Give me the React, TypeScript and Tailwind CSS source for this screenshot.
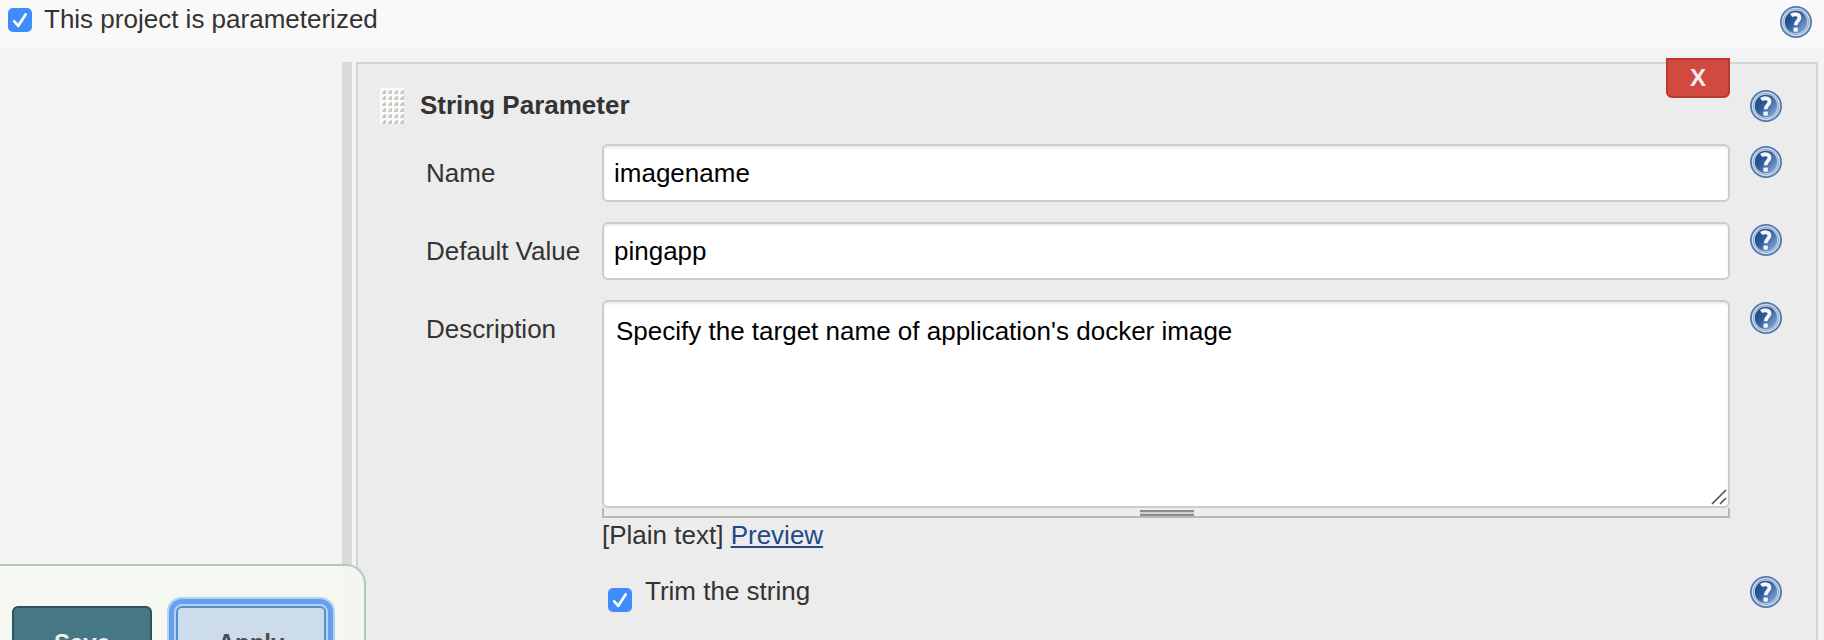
import React from "react";

function HelpIcon({ id }: { id: string }) {
  return (
    <svg width="32" height="32" viewBox="0 0 32 32" className="block shrink-0">
      <defs>
        <linearGradient id={id} x1="0.1" y1="0.2" x2="0.9" y2="0.9">
          <stop offset="0" stopColor="#204a87" />
          <stop offset="0.4" stopColor="#315d9c" />
          <stop offset="1" stopColor="#86a9d6" />
        </linearGradient>
      </defs>
      <circle cx="16" cy="16" r="16" fill="#537aaf" />
      <circle cx="16" cy="16" r="14.2" fill="#cfdaea" />
      <circle cx="16" cy="16" r="12.9" fill="#8ba5ca" />
      <circle cx="16" cy="16" r="12.1" fill="#c9d6e7" />
      <circle cx="16" cy="16" r="11.2" fill={`url(#${id})`} />
      <path
        d="M11.2 9.6c2.6-2 8.2-2.1 8.3 2 0 3.4-3.9 3.5-3.9 7.6"
        fill="none"
        stroke="#f4f7fb"
        strokeWidth="3.8"
      />
      <rect x="13.5" y="21.4" width="4.3" height="4.3" rx="0.8" fill="#f4f7fb" />
    </svg>
  );
}

function CheckedBox() {
  return (
    <span className="flex size-6 shrink-0 items-center justify-center rounded-[5px] bg-[#3f8cfc]">
      <svg width="24" height="24" viewBox="0 0 24 24">
        <path
          d="M6.2 14.2 10.2 19 17.4 7.2"
          fill="none"
          stroke="#2563b8"
          strokeOpacity="0.35"
          strokeWidth="2.6"
          strokeLinecap="round"
          strokeLinejoin="round"
        />
        <path
          d="M6.2 13.4 10.2 17.9 17.6 6.4"
          fill="none"
          stroke="#fff"
          strokeWidth="2.8"
          strokeLinecap="round"
          strokeLinejoin="round"
        />
      </svg>
    </span>
  );
}

function DragHandle() {
  return (
    <svg width="24" height="36" viewBox="0 0 24 36" className="shrink-0">
      <defs>
        <pattern id="grip" width="6" height="6" patternUnits="userSpaceOnUse">
          <rect width="6" height="6" fill="#fbfbfa" />
          <path d="M2 6V4.4L4.4 2H6V6Z" fill="#d2d1cd" />
          <path d="M3 5.6V4.6L4.6 3H5.6V5.6Z" fill="#c6c5c0" />
        </pattern>
      </defs>
      <rect width="24" height="36" fill="url(#grip)" />
    </svg>
  );
}

const field =
  "rounded-[6px] border-2 border-[#ccc] bg-white text-black shadow-[inset_0_2px_2px_rgba(0,0,0,0.075)]";

function TextRow({ id, label, value }: { id: string; label: string; value: string }) {
  return (
    <div className="flex h-[78px] items-start">
      <div className="w-[176px] shrink-0 pt-[14px]">{label}</div>
      <div className={`flex h-[58px] w-[1128px] shrink-0 items-center pl-[10px] ${field}`}>{value}</div>
      <div className="ml-5 mt-[2px]">
        <HelpIcon id={id} />
      </div>
    </div>
  );
}

export default function App() {
  return (
    <div className="relative flex h-[640px] w-[1824px] flex-col overflow-hidden bg-[#f3f3f3] font-['Liberation_Sans',Arial,sans-serif] text-[26px] leading-[30px] text-[#333]">
      <header className="flex h-12 shrink-0 items-start bg-[#f9f9f9] pl-2 pr-3">
        <div className="pt-2">
          <CheckedBox />
        </div>
        <span className="ml-3 mt-1 whitespace-nowrap">This project is parameterized</span>
        <div className="ml-auto mt-[6px]">
          <HelpIcon id="help-project" />
        </div>
      </header>

      <div className="flex flex-1 pl-[342px] pt-[14px]">
        <div className="mr-1 w-[10px] shrink-0 bg-[#dadada]" />
        <section className="relative flex w-[1462px] flex-col border-2 border-b-0 border-[#d4d4d4] bg-[#ececec]">
          <div className="flex h-20 shrink-0 items-start pl-[22px]">
            <div className="mt-6">
              <DragHandle />
            </div>
            <h2 className="ml-4 mt-[26px] font-bold">String Parameter</h2>
            <div className="ml-auto mr-[34px] mt-[26px]">
              <HelpIcon id="help-string" />
            </div>
          </div>

          <div className="flex flex-col pl-[68px]">
            <TextRow id="help-name" label="Name" value="imagename" />
            <TextRow id="help-default" label="Default Value" value="pingapp" />

            <div className="flex items-start">
              <div className="w-[176px] shrink-0 pt-[14px]">Description</div>
              <div className="w-[1128px] shrink-0">
                <div className={`flex h-[208px] items-start justify-between pl-3 pt-[14px] ${field}`}>
                  <span>Specify the target name of application's docker image</span>
                  <svg width="16" height="16" viewBox="0 0 16 16" className="mb-px mr-px self-end">
                    <path d="M1 15 15 1M9 15 15 9" stroke="#555" strokeWidth="1.7" fill="none" />
                  </svg>
                </div>
                <div className="flex h-[10px] justify-center border-2 border-t-0 border-[#b9b9b3] pl-[2px] pt-[2px]">
                  <div className="h-[6px] w-[54px] border-y-2 border-[#8d8f88] bg-[#cfd1cc]" />
                </div>
                <div className="mt-[2px] whitespace-nowrap">
                  [Plain text]{" "}
                  <a className="text-[#204a87] underline decoration-2 underline-offset-[2px]">Preview</a>
                </div>
              </div>
              <div className="ml-5 mt-[2px]">
                <HelpIcon id="help-description" />
              </div>
            </div>

            <div className="mt-[26px] flex items-start pl-[182px]">
              <div className="mt-3">
                <CheckedBox />
              </div>
              <span className="ml-[13px]">Trim the string</span>
              <div className="ml-auto mr-[34px]">
                <HelpIcon id="help-trim" />
              </div>
            </div>
          </div>

          <button className="absolute right-[86px] top-[-6px] h-10 w-16 rounded-b-[6px] border-2 border-[#bd362f] bg-[#d14a3f] text-[24px] font-bold leading-[36px] text-[#f0eeee]">
            X
          </button>
        </section>
      </div>

      <footer className="absolute left-0 top-[564px] flex h-[100px] w-[366px] items-start rounded-tr-[20px] border-r-2 border-t-2 border-[#a9cfbb] bg-[#f4f8ef]/90 pl-3 pt-10 font-bold">
        <button className="h-[60px] w-[140px] rounded-[6px] border-2 border-[#2f5263] bg-[#467785] pt-[13px] text-[24px] leading-[28px] text-[#eee]">
          Save
        </button>
        <button className="ml-6 h-[60px] w-[150px] rounded-[6px] border-2 border-[#5590cc] bg-[#cddceb] pt-[13px] text-[24px] leading-[28px] text-[#4d4d4d] shadow-[0_0_0_2px_#b4d0f2,0_0_0_7px_#659ff2,0_0_0_9px_#b8d2ee]">
          Apply
        </button>
      </footer>
    </div>
  );
}
